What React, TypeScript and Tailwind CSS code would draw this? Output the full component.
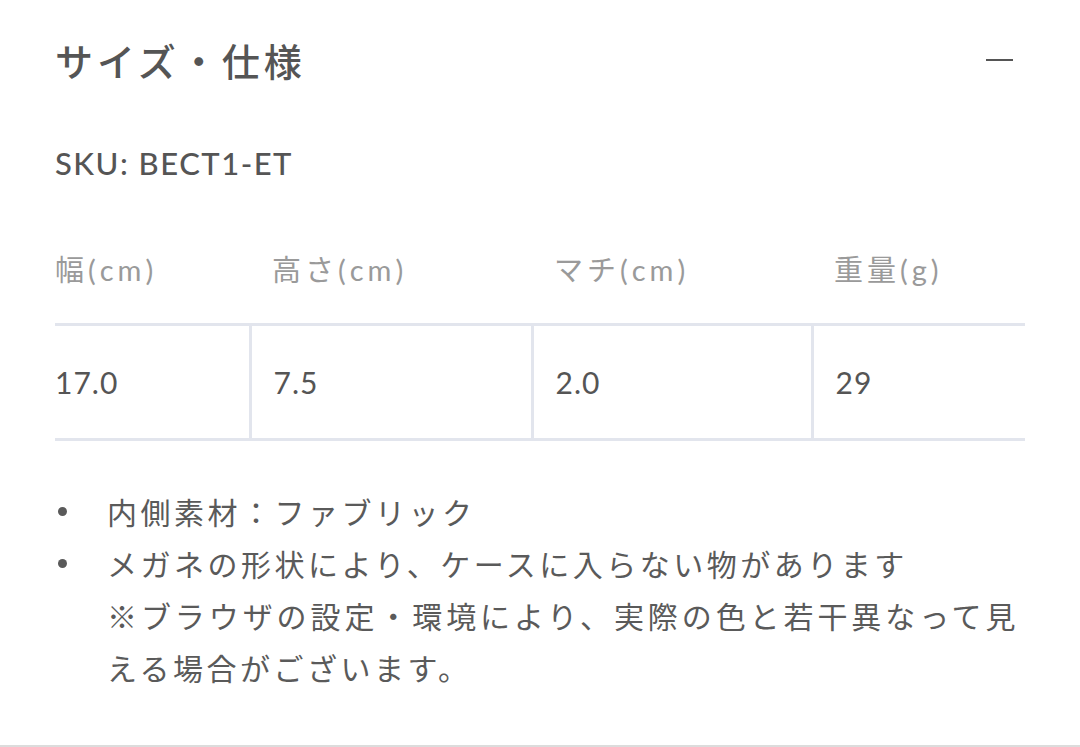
import React from 'react';

const cols = [
  { label: '幅(cm)', value: '17.0', w: 'w-[195px]' },
  { label: '高さ(cm)', value: '7.5', w: 'w-[282px]' },
  { label: 'マチ(cm)', value: '2.0', w: 'w-[280px]' },
  { label: '重量(g)', value: '29', w: 'w-[213px]' },
];

export default function App() {
  return (
    <div
      className="w-[1080px] h-[747px] bg-white border-b-2 border-[#dcdcdc] overflow-hidden"
      style={{ fontFamily: "'Lato', 'Noto Sans CJK JP', sans-serif" }}
    >
      <div className="px-[55px]">
        {/* heading */}
        <div className="mt-[31px] h-[57px] flex items-center justify-between">
          <h2 className="text-[38px] leading-[57px] tracking-[4px] font-medium text-[#555]" style={{ fontFamily: "'Noto Sans CJK JP', sans-serif" }}>
            サイズ・仕様
          </h2>
          <span className="block w-[27px] h-[2px] bg-[#555] mr-[12px]" />
        </div>

        <p className="mt-[55px] text-[31px] leading-[40px] tracking-[1.5px] font-medium text-[#555]">SKU: BECT1-ET</p>

        {/* spec table */}
        <table className="mt-[67px] w-[970px] border-collapse table-fixed">
          <thead>
            <tr>
              {cols.map((c, i) => (
                <th
                  key={c.label}
                  className={`${c.w} ${i === 0 ? 'pl-0' : 'pl-[22px]'} pb-[33px] text-left font-normal text-[29px] leading-[40px] tracking-[4px] text-[#9a9a9a]`}
                >
                  {c.label}
                </th>
              ))}
            </tr>
          </thead>
          <tbody>
            <tr className="h-[115px] border-y-[3px] border-[#e2e5ed]">
              {cols.map((c, i) => (
                <td
                  key={c.label}
                  className={`${i === 0 ? 'pl-0' : 'pl-[22px] border-l-[3px] border-[#e2e5ed]'} align-middle text-[30px] tracking-[1px] text-[#555]`}
                >
                  {c.value}
                </td>
              ))}
            </tr>
          </tbody>
        </table>

        {/* notes */}
        <ul className="mt-[44px] text-[30px] leading-[52px] tracking-[3.5px] text-[#5a5a5a]" style={{ fontFamily: "'Noto Sans CJK JP', sans-serif" }}>
          <li className="flex">
            <span className="w-[52px] h-[52px] flex items-center shrink-0">
              <span className="block w-[9px] h-[9px] ml-[3px] rounded-full bg-[#5a5a5a]" />
            </span>
            <span className="w-[912px]">内側素材：ファブリック</span>
          </li>
          <li className="flex">
            <span className="w-[52px] h-[52px] flex items-center shrink-0">
              <span className="block w-[9px] h-[9px] ml-[3px] rounded-full bg-[#5a5a5a]" />
            </span>
            <span className="w-[912px] text-justify">
              メガネの形状により、ケースに入らない物があります
              <br />
              ※ブラウザの設定・環境により、実際の色と若干異なって見える場合がございます。
            </span>
          </li>
        </ul>
      </div>
    </div>
  );
}
